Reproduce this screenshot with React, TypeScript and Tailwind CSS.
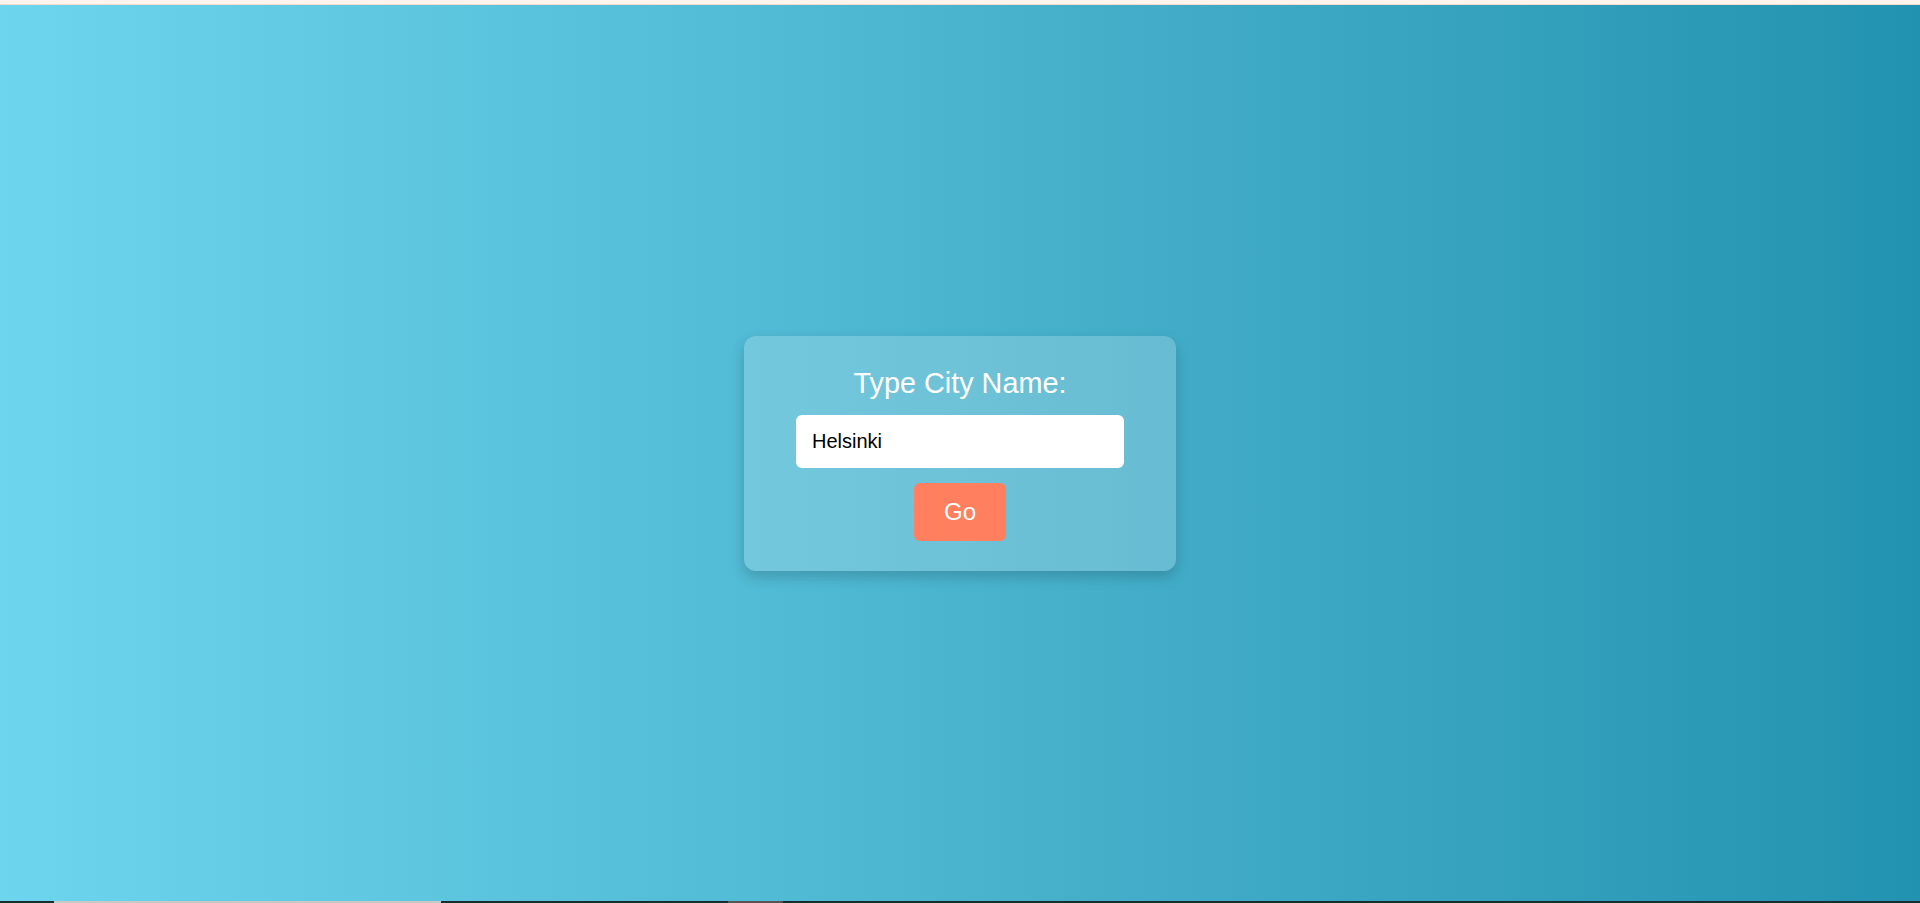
const App = () => {
  return (
    <div className="flex h-[903px] w-full flex-col font-['Liberation_Sans',Arial,sans-serif]">
      <div className="h-[5px] w-full border-b border-[#f3dccd] bg-[#fdf4ee]" />
      <main className="flex flex-1 items-center justify-center bg-linear-to-r from-[#6dd5ed] to-[#2193b0]">
        <div className="flex w-[432px] flex-col items-center rounded-[12px] bg-white/20 px-[52px] pt-[31px] pb-[30px] shadow-[0_6px_14px_rgba(0,0,0,0.18)]">
          <h2 className="mb-[15px] text-[28.8px] leading-[33px] text-white">
            Type City Name:
          </h2>
          <input
            type="text"
            defaultValue="Helsinki"
            className="h-[53px] w-[328px] rounded-[6px] bg-white px-[16px] text-[20px] text-black outline-none"
          />
          <button className="mt-[15px] h-[58px] w-[92px] rounded-[6px] bg-[#ff7f5f] text-[24px] text-white">
            Go
          </button>
        </div>
      </main>
      <div className="flex h-[2px] w-full bg-[#1b2a33]">
        <div className="ml-[54px] h-full w-[387px] bg-[#c8c8c8]" />
        <div className="ml-[287px] h-full w-[55px] bg-[#555]" />
      </div>
    </div>
  );
};

export default App;
